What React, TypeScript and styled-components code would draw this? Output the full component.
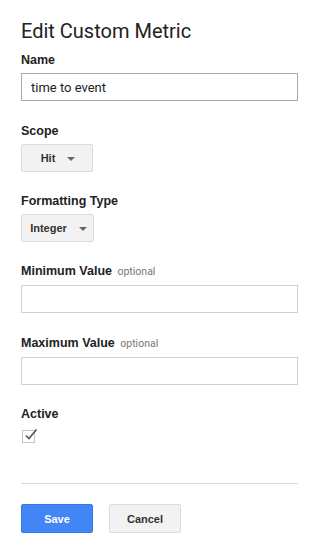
import React from "react";
import styled, { createGlobalStyle } from "styled-components";

const Global = createGlobalStyle`
  body {
    margin: 0;
    background: #fff;
    font-family: Roboto, "Liberation Sans", Arial, sans-serif;
    color: #222;
  }
`;

const Page = styled.div`
  padding: 19px 13px 0 21px;
`;

const Title = styled.h1`
  margin: 0 0 9px;
  font-size: 20px;
  font-weight: 400;
  line-height: 24px;
  color: #222;
`;

const Field = styled.div<{ $gap?: number }>`
  margin-bottom: ${(p) => p.$gap ?? 22}px;
`;

const Label = styled.div<{ $space?: number }>`
  font-family: "Liberation Sans", Arial, sans-serif;
  font-weight: 700;
  font-size: 12.5px;
  line-height: 16px;
  color: #222;
  margin-bottom: ${(p) => p.$space ?? 5}px;
`;

const Hint = styled.span`
  font-family: Roboto, sans-serif;
  font-weight: 400;
  font-size: 10.5px;
  color: #777;
  margin-left: 2px;
`;

const Input = styled.input`
  display: block;
  box-sizing: border-box;
  width: 277px;
  height: 28px;
  margin: 0;
  border: 1px solid ${(p) => (p.value ? "#a8a8a8" : "#d0d0d0")};
  padding: 0 9px;
  font-family: Roboto, sans-serif;
  font-size: 13px;
  color: #222;
  outline: none;
`;

const Select = styled.button<{ $width: number }>`
  display: flex;
  align-items: center;
  justify-content: center;
  gap: 12px;
  box-sizing: border-box;
  width: ${(p) => p.$width}px;
  height: 28px;
  margin: 0;
  background: #f2f2f2;
  border: 1px solid #dcdcdc;
  border-radius: 2px;
  font-family: "Liberation Sans", Arial, sans-serif;
  font-weight: 700;
  font-size: 11px;
  color: #333;
  padding: 0 0 0 2px;
`;

const Caret = styled.span`
  width: 0;
  height: 0;
  border-left: 4px solid transparent;
  border-right: 4px solid transparent;
  border-top: 4px solid #666;
  margin-top: 1px;
`;

const Check = styled.div`
  position: relative;
  width: 13px;
  height: 13px;
  box-sizing: border-box;
  border: 1px solid #c6c6c6;
  margin: 0 0 0 1px;
`;

const CheckMark = styled.svg`
  position: absolute;
  left: 1px;
  top: -3px;
`;

const Divider = styled.hr`
  margin: 40px 0 20px;
  border: none;
  border-top: 1px solid #dadada;
  width: 277px;
`;

const Buttons = styled.div`
  display: flex;
  gap: 16px;
`;

const Button = styled.button<{ $primary?: boolean }>`
  box-sizing: border-box;
  width: 72px;
  height: 29px;
  border-radius: 2px;
  border: 1px solid ${(p) => (p.$primary ? "#3079ed" : "#dcdcdc")};
  background: ${(p) => (p.$primary ? "#4285f4" : "#f2f2f2")};
  color: ${(p) => (p.$primary ? "#fff" : "#333")};
  font-family: "Liberation Sans", Arial, sans-serif;
  font-weight: 700;
  font-size: 11px;
  padding: 0;
`;

export default function App() {
  return (
    <Page>
      <Global />
      <Title>Edit Custom Metric</Title>
      <Field>
        <Label>Name</Label>
        <Input value="time to event" readOnly />
      </Field>
      <Field $gap={21}>
        <Label>Scope</Label>
        <Select $width={72}>
          Hit <Caret />
        </Select>
      </Field>
      <Field $gap={21}>
        <Label>Formatting Type</Label>
        <Select $width={73}>
          Integer <Caret />
        </Select>
      </Field>
      <Field>
        <Label>
          Minimum Value <Hint>optional</Hint>
        </Label>
        <Input value="" readOnly />
      </Field>
      <Field $gap={21}>
        <Label>
          Maximum Value <Hint>optional</Hint>
        </Label>
        <Input value="" readOnly />
      </Field>
      <Field $gap={0}>
        <Label $space={8}>Active</Label>
        <Check>
          <CheckMark width="14" height="13" viewBox="0 0 14 13">
            <path d="M2 7.5 L5 10.5 L12.5 1.5" fill="none" stroke="#555" strokeWidth="1.6" />
          </CheckMark>
        </Check>
      </Field>
      <Divider />
      <Buttons>
        <Button $primary>Save</Button>
        <Button>Cancel</Button>
      </Buttons>
    </Page>
  );
}
